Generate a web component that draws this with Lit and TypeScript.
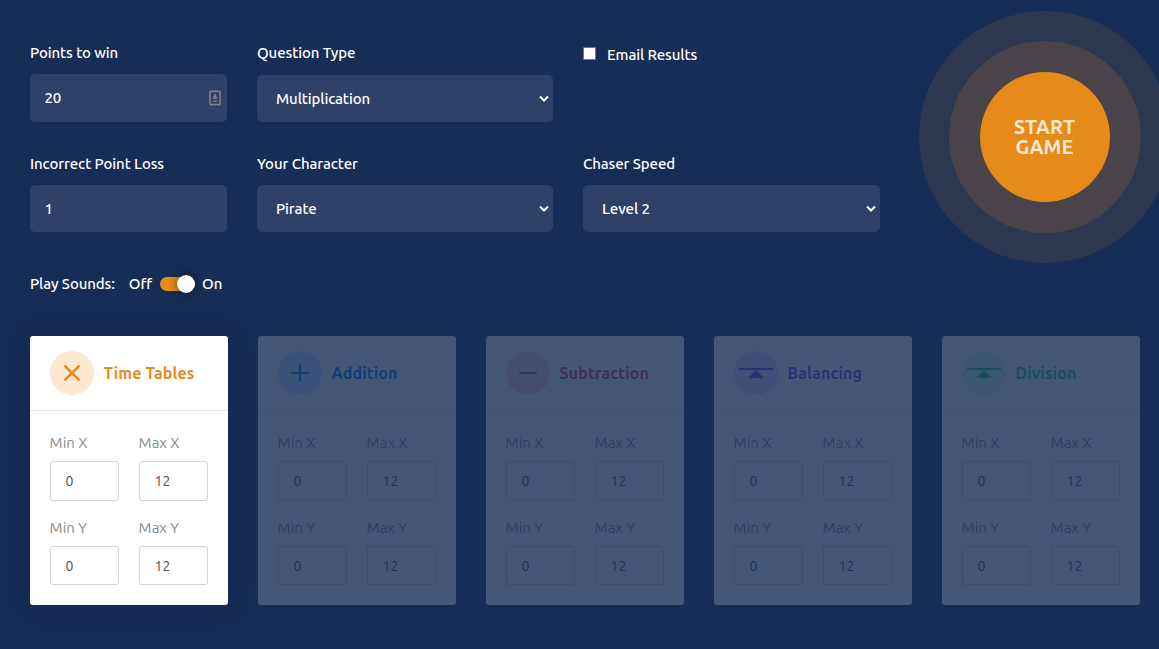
import { LitElement, html, css, svg, nothing } from "lit";
import { customElement, property } from "lit/decorators.js";
import { classMap } from "lit/directives/class-map.js";

const icons: Record<string, unknown> = {
  times: svg`<path d="M15.3 15.3L28.7 28.7M28.7 15.3L15.3 28.7" stroke="currentColor" stroke-width="2.6" stroke-linecap="round" fill="none"/>`,
  plus: svg`<path d="M22 14V30M14 22H30" stroke="currentColor" stroke-width="2.2" stroke-linecap="round" fill="none"/>`,
  minus: svg`<path d="M14 22H30" stroke="currentColor" stroke-width="2.2" stroke-linecap="round" fill="none"/>`,
  balance: svg`<path d="M5 17H39V19H5ZM22 19L30 27H14Z" fill="currentColor"/>`,
};

@customElement("form-field")
class FormField extends LitElement {
  @property() label = "";
  @property() value = "";
  @property({ type: Boolean }) select = false;
  @property({ type: Boolean }) contact = false;

  static styles = css`
    :host { display: flex; flex-direction: column; justify-content: space-between; }
    .label { line-height: 20px; }
    .box {
      display: flex; align-items: center; justify-content: space-between;
      box-sizing: border-box; height: 47px; padding: 0 6px 0 14.5px;
      border-radius: 5px; background: #2e4166;
    }
    .box.tall { height: 48px; }
    .box.tall span { padding-bottom: 1px; }
    .box.select { padding: 0 4px 0 19px; }
    svg { display: block; }
  `;

  render() {
    return html`
      <div class="label">${this.label}</div>
      <div class=${classMap({ box: true, select: this.select, tall: this.contact })}>
        <span>${this.value}</span>
        ${this.select
          ? html`<svg width="10" height="8" viewBox="0 0 10 8"><path d="M1 1.5L5 5.5L9 1.5" fill="none" stroke="#fff" stroke-width="2"/></svg>`
          : nothing}
        ${this.contact
          ? html`<svg width="12" height="16" viewBox="0 0 12 16"><rect x=".9" y="1.4" width="10.2" height="13.2" rx=".6" fill="none" stroke="#7e7f83" stroke-width="1.6"/><path d="M5 4h2v2.5h1v2.5h-4v-2.500h1zM4 10.500h4v1.500h-4z" fill="#75797f"/></svg>`
          : nothing}
      </div>`;
  }
}

@customElement("range-card")
class RangeCard extends LitElement {
  @property() name = "";
  @property() icon = "";
  @property() tone = "";
  @property({ type: Boolean }) active = false;

  static styles = css`
    :host { display: block; letter-spacing: 0; }
    .card { height: 269px; border-radius: 3px; background: #fff; opacity: 0.2; }
    .card.active { opacity: 1; box-shadow: 0 0 30px rgba(24, 31, 72, 0.3); }
    .head {
      display: flex; align-items: center; gap: 9.5px; box-sizing: border-box;
      height: 75px; padding: 0 20px; border-bottom: 1px solid #e6e6e6;
      font-size: 16px; font-weight: 700; letter-spacing: 0.12px;
    }
    .disc { width: 44px; height: 44px; border-radius: 50%; flex: none; }
    .disc svg { display: block; }
    .orange { color: #e68a19; } .orange .disc { background: #fae8d1; }
    .blue { color: #0080ff; } .blue .disc { background: #cce6ff; }
    .red { color: #f03050; } .red .disc { background: #fcd6dc; }
    .violet { color: #7048ff; } .violet .disc { background: #e0daff; }
    .green { color: #28d060; } .green .disc { background: #d4f2df; }
    .body {
      display: grid; grid-template-columns: 69px 69px; column-gap: 20px; row-gap: 17px;
      padding: 22px 20px 0; font-weight: 400; color: #8a8a8a;
    }
    .label { line-height: 20px; margin-left: -0.4px; }
    .num {
      box-sizing: border-box; height: 40px; margin-top: 8px; padding: 0 14.6px;
      border: 1px solid #d4d4d4; border-radius: 3px; background: #fff;
      font-size: 14px; font-weight: 400; line-height: 38px; color: #495057;
    }
    .num.short { height: 39px; }
  `;

  render() {
    const cells = [["Min X", 0], ["Max X", 12], ["Min Y", 0], ["Max Y", 12]];
    return html`
      <div class=${classMap({ card: true, active: this.active })}>
        <div class="head ${this.tone}">
          <div class="disc"><svg width="44" height="44" viewBox="0 0 44 44">${icons[this.icon]}</svg></div>
          <span>${this.name}</span>
        </div>
        <div class="body">
          ${cells.map(([label, n], i) => html`<div>
            <div class="label">${label}</div>
            <div class=${classMap({ num: true, short: i > 1 })}>${n}</div>
          </div>`)}
        </div>
      </div>`;
  }
}

@customElement("app-root")
class AppRoot extends LitElement {
  static styles = css`
    :host {
      display: block; box-sizing: border-box; width: 1159px; height: 649px; overflow: hidden;
      padding: 43px 19px 0 30px; background: #162d55; color: #fff;
      font: 500 15px "Ubuntu", "Noto Sans", sans-serif; letter-spacing: -0.1px;
    }
    .top { display: flex; height: 293px; }
    .settings { width: 850px; }
    .fields {
      display: grid; grid-template-columns: 197px 296px 297px; column-gap: 30px;
      grid-template-rows: 79px 78px; row-gap: 32px;
    }
    .email { display: flex; align-items: flex-start; gap: 11px; line-height: 20px; padding-top: 2px; }
    .check {
      box-sizing: border-box; width: 13px; height: 13px; margin-top: 2px;
      border: 1px solid #767676; border-radius: 1px; background: #fff;
    }
    .sounds { display: flex; align-items: center; height: 20px; margin-top: 41px; }
    .off { margin-left: 14px; }
    .toggle {
      display: flex; align-items: center; justify-content: flex-end;
      width: 35px; height: 14px; margin: 1px 7px 0 8px; border-radius: 7px; background: #e68a19;
    }
    .knob {
      width: 18px; height: 18px; flex: none; border-radius: 50%; background: #fff;
      box-shadow: 0 0 8px rgba(0, 0, 0, 0.6);
    }
    .start {
      display: flex; flex-direction: column; align-items: center; justify-content: center; flex: none;
      box-sizing: border-box; padding-right: 1px;
      width: 130px; height: 130px; margin: 29px 0 0 100px; border-radius: 50%;
      background: #e68a19; color: #fae8d1;
      font-size: 20px; font-weight: 700; line-height: 20px; letter-spacing: 0.15px;
      box-shadow: 0 0 0 31px #4a444a, 0 0 0 61px #2d3850;
    }
    .cards { display: grid; grid-template-columns: repeat(5, 198px); column-gap: 30px; }
  `;

  render() {
    return html`
      <div class="top">
        <div class="settings">
          <div class="fields">
            <form-field label="Points to win" value="20" contact></form-field>
            <form-field label="Question Type" value="Multiplication" select></form-field>
            <div class="email"><span class="check"></span><span>Email Results</span></div>
            <form-field label="Incorrect Point Loss" value="1"></form-field>
            <form-field label="Your Character" value="Pirate" select></form-field>
            <form-field label="Chaser Speed" value="Level 2" select></form-field>
          </div>
          <div class="sounds">
            <span>Play Sounds:</span><span class="off">Off</span>
            <span class="toggle"><span class="knob"></span></span><span>On</span>
          </div>
        </div>
        <div class="start"><span>START</span><span>GAME</span></div>
      </div>
      <div class="cards">
        <range-card name="Time Tables" icon="times" tone="orange" active></range-card>
        <range-card name="Addition" icon="plus" tone="blue"></range-card>
        <range-card name="Subtraction" icon="minus" tone="red"></range-card>
        <range-card name="Balancing" icon="balance" tone="violet"></range-card>
        <range-card name="Division" icon="balance" tone="green"></range-card>
      </div>`;
  }
}
